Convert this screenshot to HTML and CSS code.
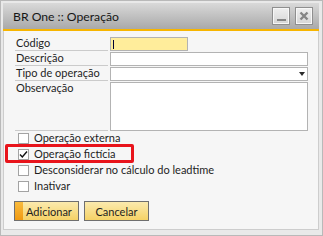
FILE: index.html
```html
<!DOCTYPE html>
<html lang="pt">
<head>
<meta charset="utf-8">
<title>BR One :: Operação</title>
<link rel="stylesheet" href="styles.css">
</head>
<body>
<div class="window">
  <div class="titlebar">
    <span class="title">BR One :: Operação</span>
    <div class="controls">
      <span class="ctl"><svg width="16" height="16" viewBox="0 0 16 16"><rect x="4" y="11" width="9" height="2" fill="#858585"/></svg></span>
      <span class="ctl"><svg width="16" height="16" viewBox="0 0 16 16"><path d="M4.5 4.5 L11.5 11.5 M11.5 4.5 L4.5 11.5" stroke="#858585" stroke-width="2.4" fill="none"/></svg></span>
    </div>
  </div>
  <div class="accent"></div>
  <div class="body">
    <div class="form">
      <div class="lbl">Código</div>
      <div class="cell"><div class="field code"><span class="caret"></span></div></div>
      <div class="lbl">Descrição</div>
      <div class="cell"><div class="field"></div></div>
      <div class="lbl">Tipo de operação</div>
      <div class="cell"><div class="field select"><span class="arrow"></span></div></div>
      <div class="lbl tall">Observação</div>
      <div class="cell"><div class="field area"></div></div>
    </div>
    <div class="checks">
      <div class="chk"><span class="box"></span><span class="txt">Operação externa</span></div>
      <div class="chk"><span class="box"><svg width="9" height="9" viewBox="0 0 9 9"><path d="M1 4.5 L3.3 7 L8 1.5" stroke="#111" stroke-width="1.4" fill="none"/></svg></span><span class="txt">Operação fictícia</span></div>
      <div class="chk"><span class="box"></span><span class="txt">Desconsiderar no cálculo do leadtime</span></div>
      <div class="chk"><span class="box"></span><span class="txt">Inativar</span></div>
      <div class="highlight"></div>
    </div>
    <div class="actions">
      <button class="btn primary"><span class="strip"></span><span class="btxt">Adicionar</span></button>
      <button class="btn"><span class="btxt">Cancelar</span></button>
    </div>
  </div>
</div>
</body>
</html>
```

FILE: styles.css
```css
html, body {
  margin: 0;
  padding: 0;
  background: #ffffff;
}
.window {
  width: 323px;
  height: 236px;
  box-sizing: border-box;
  border: 1px solid #b9b9b9;
  background: #e9e9e9;
  padding: 2px 3px 5px 2px;
  display: flex;
  flex-direction: column;
  font-family: Lato, "Liberation Sans", sans-serif;
  font-size: 11px;
  color: #1e1e1e;
}
.titlebar {
  height: 26px;
  flex: none;
  display: flex;
  align-items: center;
  justify-content: space-between;
  padding: 0 6px 0 10px;
  background: linear-gradient(#d9d9d9, #a9a9a9);
}
.title {
  font-size: 12.2px;
  color: #161616;
  padding-top: 1px;
}
.controls {
  display: flex;
  gap: 5px;
}
.ctl {
  width: 18px;
  height: 18px;
  box-sizing: border-box;
  border: 1px solid #8f8f8f;
  background: linear-gradient(#efefef, #d6d6d6);
  box-shadow: inset 0 0 0 1px #f7f7f7;
  display: flex;
  align-items: center;
  justify-content: center;
}
.ctl svg { display: block; }
.accent {
  height: 2px;
  flex: none;
  background: #f7b500;
}
.body {
  flex: 1;
  background: #f6f6f6;
  border: 1px solid #cdcdcd;
  border-top: none;
  padding: 6px 10px 0 11px;
}
.form {
  display: grid;
  grid-template-columns: 93px 1fr;
  grid-template-rows: 14px 14px 14px 49px;
  column-gap: 2px;
  row-gap: 1px;
}
.lbl {
  box-sizing: border-box;
  border-bottom: 1px solid #cbcbcb;
  padding-left: 1px;
  line-height: 12px;
  white-space: nowrap;
}
.cell { display: flex; }
.field {
  flex: 1;
  box-sizing: border-box;
  border: 1px solid #b3b3b3;
  background: #ffffff;
  position: relative;
}
.field.code {
  flex: none;
  width: 78px;
  background: #ffed9b;
}
.caret {
  position: absolute;
  left: 2px;
  top: 2px;
  width: 1px;
  height: 9px;
  background: #000033;
}
.arrow {
  position: absolute;
  right: 2px;
  top: 4px;
  width: 0;
  height: 0;
  border-left: 3.5px solid transparent;
  border-right: 3.5px solid transparent;
  border-top: 4px solid #2a2a2a;
}
.checks {
  position: relative;
  padding: 1px 0 0 3px;
  display: flex;
  flex-direction: column;
}
.chk {
  height: 16px;
  display: flex;
  align-items: flex-start;
  gap: 5px;
}
.box {
  width: 11px;
  height: 11px;
  box-sizing: border-box;
  border: 1px solid #a3a3a3;
  background: #ffffff;
  margin-top: 1px;
  display: flex;
  align-items: center;
  justify-content: center;
}
.box svg { display: block; }
.txt {
  line-height: 12px;
  white-space: nowrap;
}
.highlight {
  position: absolute;
  left: -10px;
  top: 13px;
  width: 129px;
  height: 19px;
  box-sizing: border-box;
  border: 3px solid #e8141b;
  border-radius: 2px;
}
.actions {
  display: flex;
  gap: 5px;
  margin-top: 5px;
  margin-left: -1px;
}
.btn {
  width: 65px;
  height: 20px;
  box-sizing: border-box;
  border: 1px solid #6f6f6f;
  background: linear-gradient(#fbeaae, #f5d266);
  padding: 0;
  font-family: Lato, "Liberation Sans", sans-serif;
  font-size: 11px;
  color: #1e1e1e;
  display: flex;
  align-items: center;
  justify-content: center;
}
.btn.primary {
  justify-content: flex-start;
}
.strip {
  width: 8px;
  height: 100%;
  background: linear-gradient(#f9bb3e, #f09a12);
  flex: none;
}
.btn.primary .btxt {
  padding-left: 3px;
}
```
